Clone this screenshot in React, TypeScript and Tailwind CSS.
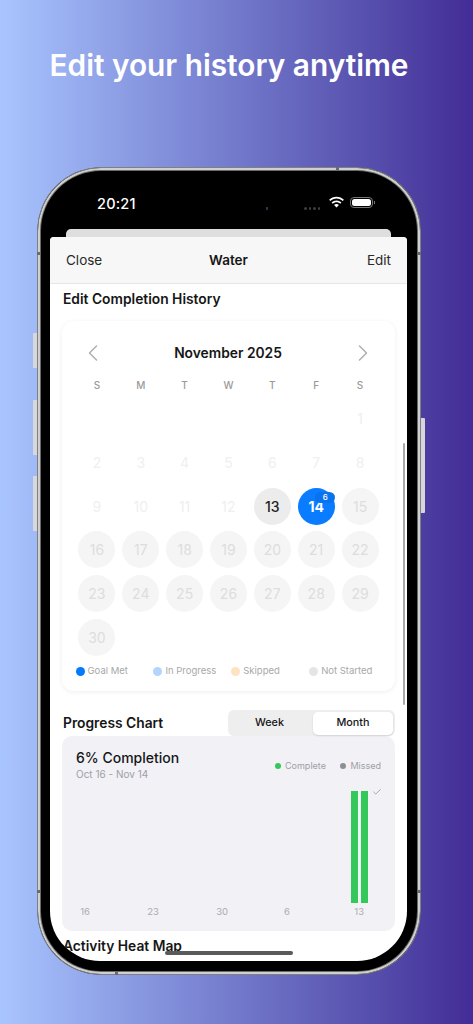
import { ChevronLeft, ChevronRight, Check } from "lucide-react";

const weekDays = ["S", "M", "T", "W", "T", "F", "S"];
const days = Array.from({ length: 30 }, (_, i) => i + 1);

const legend = [
  { label: "Goal Met", dot: "bg-[#007aff]" },
  { label: "In Progress", dot: "bg-[#b3d4fd]" },
  { label: "Skipped", dot: "bg-[#fde3c4]" },
  { label: "Not Started", dot: "bg-[#e5e5e5]" },
];

const axis = [
  { label: "16", width: "w-[28px]" },
  { label: "23", width: "w-[69px]" },
  { label: "30", width: "w-[69px]" },
  { label: "6", width: "w-[62px]" },
  { label: "13", width: "w-[74px]" },
];

const DayCell = ({ day }: { day: number }) => {
  if (day === 14) {
    return (
      <div className="relative flex h-[37px] w-[37px] items-center justify-center rounded-full bg-[#0a7cff] text-[14px] font-bold text-white">
        14
        <span className="absolute right-0 top-[4px] flex h-[11px] w-[20px] items-center justify-center rounded-full bg-[#0a72ee] pl-[1px] text-[8px] font-medium leading-none">
          6
        </span>
      </div>
    );
  }
  if (day === 13) {
    return (
      <div className="flex h-[37px] w-[37px] items-center justify-center rounded-full bg-[#ececec] text-[14px] font-medium text-[#222222]">
        13
      </div>
    );
  }
  if (day > 14) {
    return (
      <div className="flex h-[37px] w-[37px] items-center justify-center rounded-full bg-[#f5f5f5] text-[14px] text-[#dddddd]">
        {day}
      </div>
    );
  }
  return <div className="flex h-[37px] w-[37px] items-center justify-center text-[14px] text-[#efefef]">{day}</div>;
};

const Calendar = () => (
  <div className="mx-[12px] mt-[12px] h-[370px] rounded-[12px] bg-white px-[13px] pt-[20px] shadow-[0_1px_5px_rgba(0,0,0,0.07)]">
    <div className="flex h-[24px] items-center justify-between pl-[4px] pr-[5px]">
      <ChevronLeft className="h-[28px] w-[28px] text-[#b0b0b0]" strokeWidth={1.3} />
      <span className="text-[13.8px] font-semibold text-[#161616]">November 2025</span>
      <ChevronRight className="h-[28px] w-[28px] text-[#b0b0b0]" strokeWidth={1.3} />
    </div>
    <div className="mt-[12px] grid h-[16px] grid-cols-7 items-center text-center text-[10px] font-medium text-[#9a9a9a]">
      {weekDays.map((d, i) => (
        <span key={i}>{d}</span>
      ))}
    </div>
    <div className="mt-[4px] grid grid-cols-7">
      {Array.from({ length: 6 }, (_, i) => (
        <div key={`empty-${i}`} className="h-[43.7px]" />
      ))}
      {days.map((day) => (
        <div key={day} className="flex h-[43.7px] items-center justify-center">
          <DayCell day={day} />
        </div>
      ))}
    </div>
    <div className="mt-[5px] grid h-[12px] w-[312px] grid-cols-4 pl-[0.5px]">
      {legend.map((item) => (
        <div key={item.label} className="flex items-center gap-[3px]">
          <span className={`h-[9px] w-[9px] rounded-full ${item.dot}`} />
          <span className="text-[9.5px] text-[#a8a8a8]">{item.label}</span>
        </div>
      ))}
    </div>
  </div>
);

const ProgressChart = () => (
  <div>
    <div className="mt-[19px] flex h-[26px] items-center justify-between pl-[13px] pr-[12px]">
      <span className="text-[13.8px] font-semibold text-[#161616]">Progress Chart</span>
      <div className="flex h-[26px] w-[167px] items-center rounded-[6px] bg-[#eeeeee] p-[2px] text-[10.8px] font-medium text-[#161616]">
        <span className="flex-1 pr-[4px] text-center">Week</span>
        <span className="flex h-[23px] w-[80px] items-center justify-center rounded-[5px] bg-white shadow-[0_1px_2px_rgba(0,0,0,0.12)]">
          Month
        </span>
      </div>
    </div>
    <div className="mx-[12px] h-[195px] rounded-[10px] bg-[#f1f1f6] pt-[13px]">
      <div className="flex items-start justify-between pl-[14px] pr-[14px]">
        <div>
          <div className="text-[14px] font-medium leading-[18px] text-[#161616]">6% Completion</div>
          <div className="text-[10px] leading-[15px] text-[#a0a0a5]">Oct 16 - Nov 14</div>
        </div>
        <div className="mt-[10px] flex items-center text-[9px] text-[#a0a0a5]">
          <span className="mr-[4px] h-[6.5px] w-[6.5px] rounded-full bg-[#34c759]" />
          <span>Complete</span>
          <span className="ml-[14px] mr-[4px] h-[6.5px] w-[6.5px] rounded-full bg-[#8e8e93]" />
          <span>Missed</span>
        </div>
      </div>
      <div className="relative mt-[9px] flex h-[112px] justify-end gap-[3.5px] pr-[27.5px]">
        <div className="h-full w-[6.5px] bg-[#34c759]" />
        <div className="h-full w-[6.5px] bg-[#34c759]" />
        <Check className="absolute right-[13px] top-[-4px] h-[10px] w-[10px] text-[#98989d]" strokeWidth={2} />
      </div>
      <div className="mt-[3px] flex h-[12px] items-center text-[9.5px] text-[#acacb0]">
        {axis.map((a) => (
          <span key={a.label} className={`${a.width} text-right`}>
            {a.label}
          </span>
        ))}
      </div>
    </div>
  </div>
);

const StatusBar = () => (
  <div className="relative flex h-[49px] items-start pl-[47px] pt-[12px] text-white">
    <span className="text-[14.5px] font-medium leading-[24px] tracking-[0.2px]">20:21</span>
    <span className="absolute left-[216px] top-[27px] h-[3px] w-[1.5px] bg-[#2a3350]" />
    <div className="absolute left-[254px] top-[27px] flex gap-[2px]">
      <span className="h-[2.5px] w-[2.5px] rounded-full bg-[#3d3d3d]" />
      <span className="h-[2.5px] w-[2.5px] rounded-full bg-[#3d3d3d]" />
      <span className="h-[2.5px] w-[2.5px] rounded-full bg-[#3d3d3d]" />
      <span className="h-[2.5px] w-[2.5px] rounded-full bg-[#3d3d3d]" />
    </div>
    <svg className="absolute left-[278px] top-[16px]" width="17" height="13" viewBox="0 0 17 13" fill="white">
      <path d="M8.5 2.6c2.4 0 4.6.9 6.2 2.5l1.2-1.3C13.9 1.8 11.3.7 8.5.7S3.100 1.800 1.100 3.800l1.200 1.300C3.900 3.500 6.100 2.600 8.500 2.600z" />
      <path d="M8.500 6.200c1.400 0 2.700.5 3.700 1.500l1.200-1.300C12.100 5.100 10.400 4.400 8.500 4.400S4.900 5.100 3.600 6.400l1.200 1.300c1-1 2.300-1.500 3.700-1.500z" />
      <path d="M8.500 8c-1 0-1.800.4-2.400.9l2.400 2.600 2.400-2.600C10.300 8.400 9.500 8 8.500 8z" />
    </svg>
    <div className="absolute left-[300px] top-[17px] flex items-center">
      <div className="h-[11px] w-[23px] rounded-[4px] border border-[#777777] p-[1px]">
        <div className="h-full w-full rounded-[2.5px] bg-white" />
      </div>
      <span className="ml-[0.5px] h-[3px] w-[1px] bg-[#777777]" />
    </div>
  </div>
);

const Phone = () => (
  <div className="relative mx-[37px] mt-[25px] h-[808px] w-[384px]">
    {/* hardware buttons */}
    <span className="absolute left-[-4px] top-[166px] h-[35px] w-[4px] rounded-l-[1px] bg-[#d8d8dc]" />
    <span className="absolute left-[-4px] top-[233px] h-[55px] w-[4px] rounded-l-[1px] bg-[#d8d8dc]" />
    <span className="absolute left-[-4px] top-[309px] h-[55px] w-[4px] rounded-l-[1px] bg-[#d8d8dc]" />
    <span className="absolute right-[-3.5px] top-[251px] h-[95px] w-[3.5px] rounded-r-[1px] bg-[#d6d6da]" />
    {/* antenna bands */}
    <span className="absolute left-[299px] top-0 h-[3px] w-[3px] bg-[#6b6b6b]" />
    <span className="absolute left-[78px] bottom-0 h-[3px] w-[3px] bg-[#6b6b6b]" />
    <span className="absolute left-0 top-[85px] h-[3px] w-[3px] bg-[#6b6b6b]" />
    <span className="absolute right-0 top-[85px] h-[3px] w-[3px] bg-[#6b6b6b]" />
    <span className="absolute left-0 bottom-[82px] h-[3px] w-[3px] bg-[#6b6b6b]" />
    <span className="absolute right-0 bottom-[82px] h-[3px] w-[3px] bg-[#6b6b6b]" />

    <div className="h-full w-full rounded-[64px] border border-[#808084] bg-black shadow-[inset_0_0_0_2px_#cfcfcf,inset_0_0_0_3px_#6a6a6a]">
      <div className="flex h-full flex-col pl-[12px] pr-[13px] pt-[12px] pb-[13px]">
        <StatusBar />
        <div className="mx-[16px] h-[8px] rounded-t-[5px] bg-[#dedede]" />
        <div className="relative flex-1 overflow-hidden rounded-b-[50px] rounded-t-[4px] bg-white">
          <div className="grid h-[47px] grid-cols-3 items-center border-b border-[#e6e6e6] bg-[#f7f7f7] px-[16px] text-[13.5px] text-[#2a2a2a]">
            <span>Close</span>
            <span className="text-center font-semibold text-[#161616]">Water</span>
            <span className="text-right">Edit</span>
          </div>
          <div className="pl-[13px] pt-[5px] text-[13.8px] font-semibold leading-[20px] text-[#161616]">
            Edit Completion History
          </div>
          <Calendar />
          <ProgressChart />
          <div className="pl-[13px] pt-[5px] text-[13.8px] font-semibold leading-[20px] text-[#161616]">
            Activity Heat Map
          </div>
          {/* scroll bar and home indicator */}
          <span className="absolute right-[2px] top-[206px] h-[262px] w-[2.5px] rounded-full bg-[#a9a9a9]" />
          <span className="absolute left-[115px] top-[714px] h-[4px] w-[128px] rounded-full bg-[#5a5a5a]" />
        </div>
      </div>
    </div>
  </div>
);

export default function App() {
  return (
    <div className="h-[1024px] w-[473px] overflow-hidden bg-gradient-to-r from-[#a9c5ff] to-[#432c96] [font-family:Inter,sans-serif]">
      <h1 className="h-[142px] pr-[15px] pt-[44px] text-center text-[29.8px] font-semibold leading-[42px] text-white">
        Edit your history anytime
      </h1>
      <Phone />
    </div>
  );
}
